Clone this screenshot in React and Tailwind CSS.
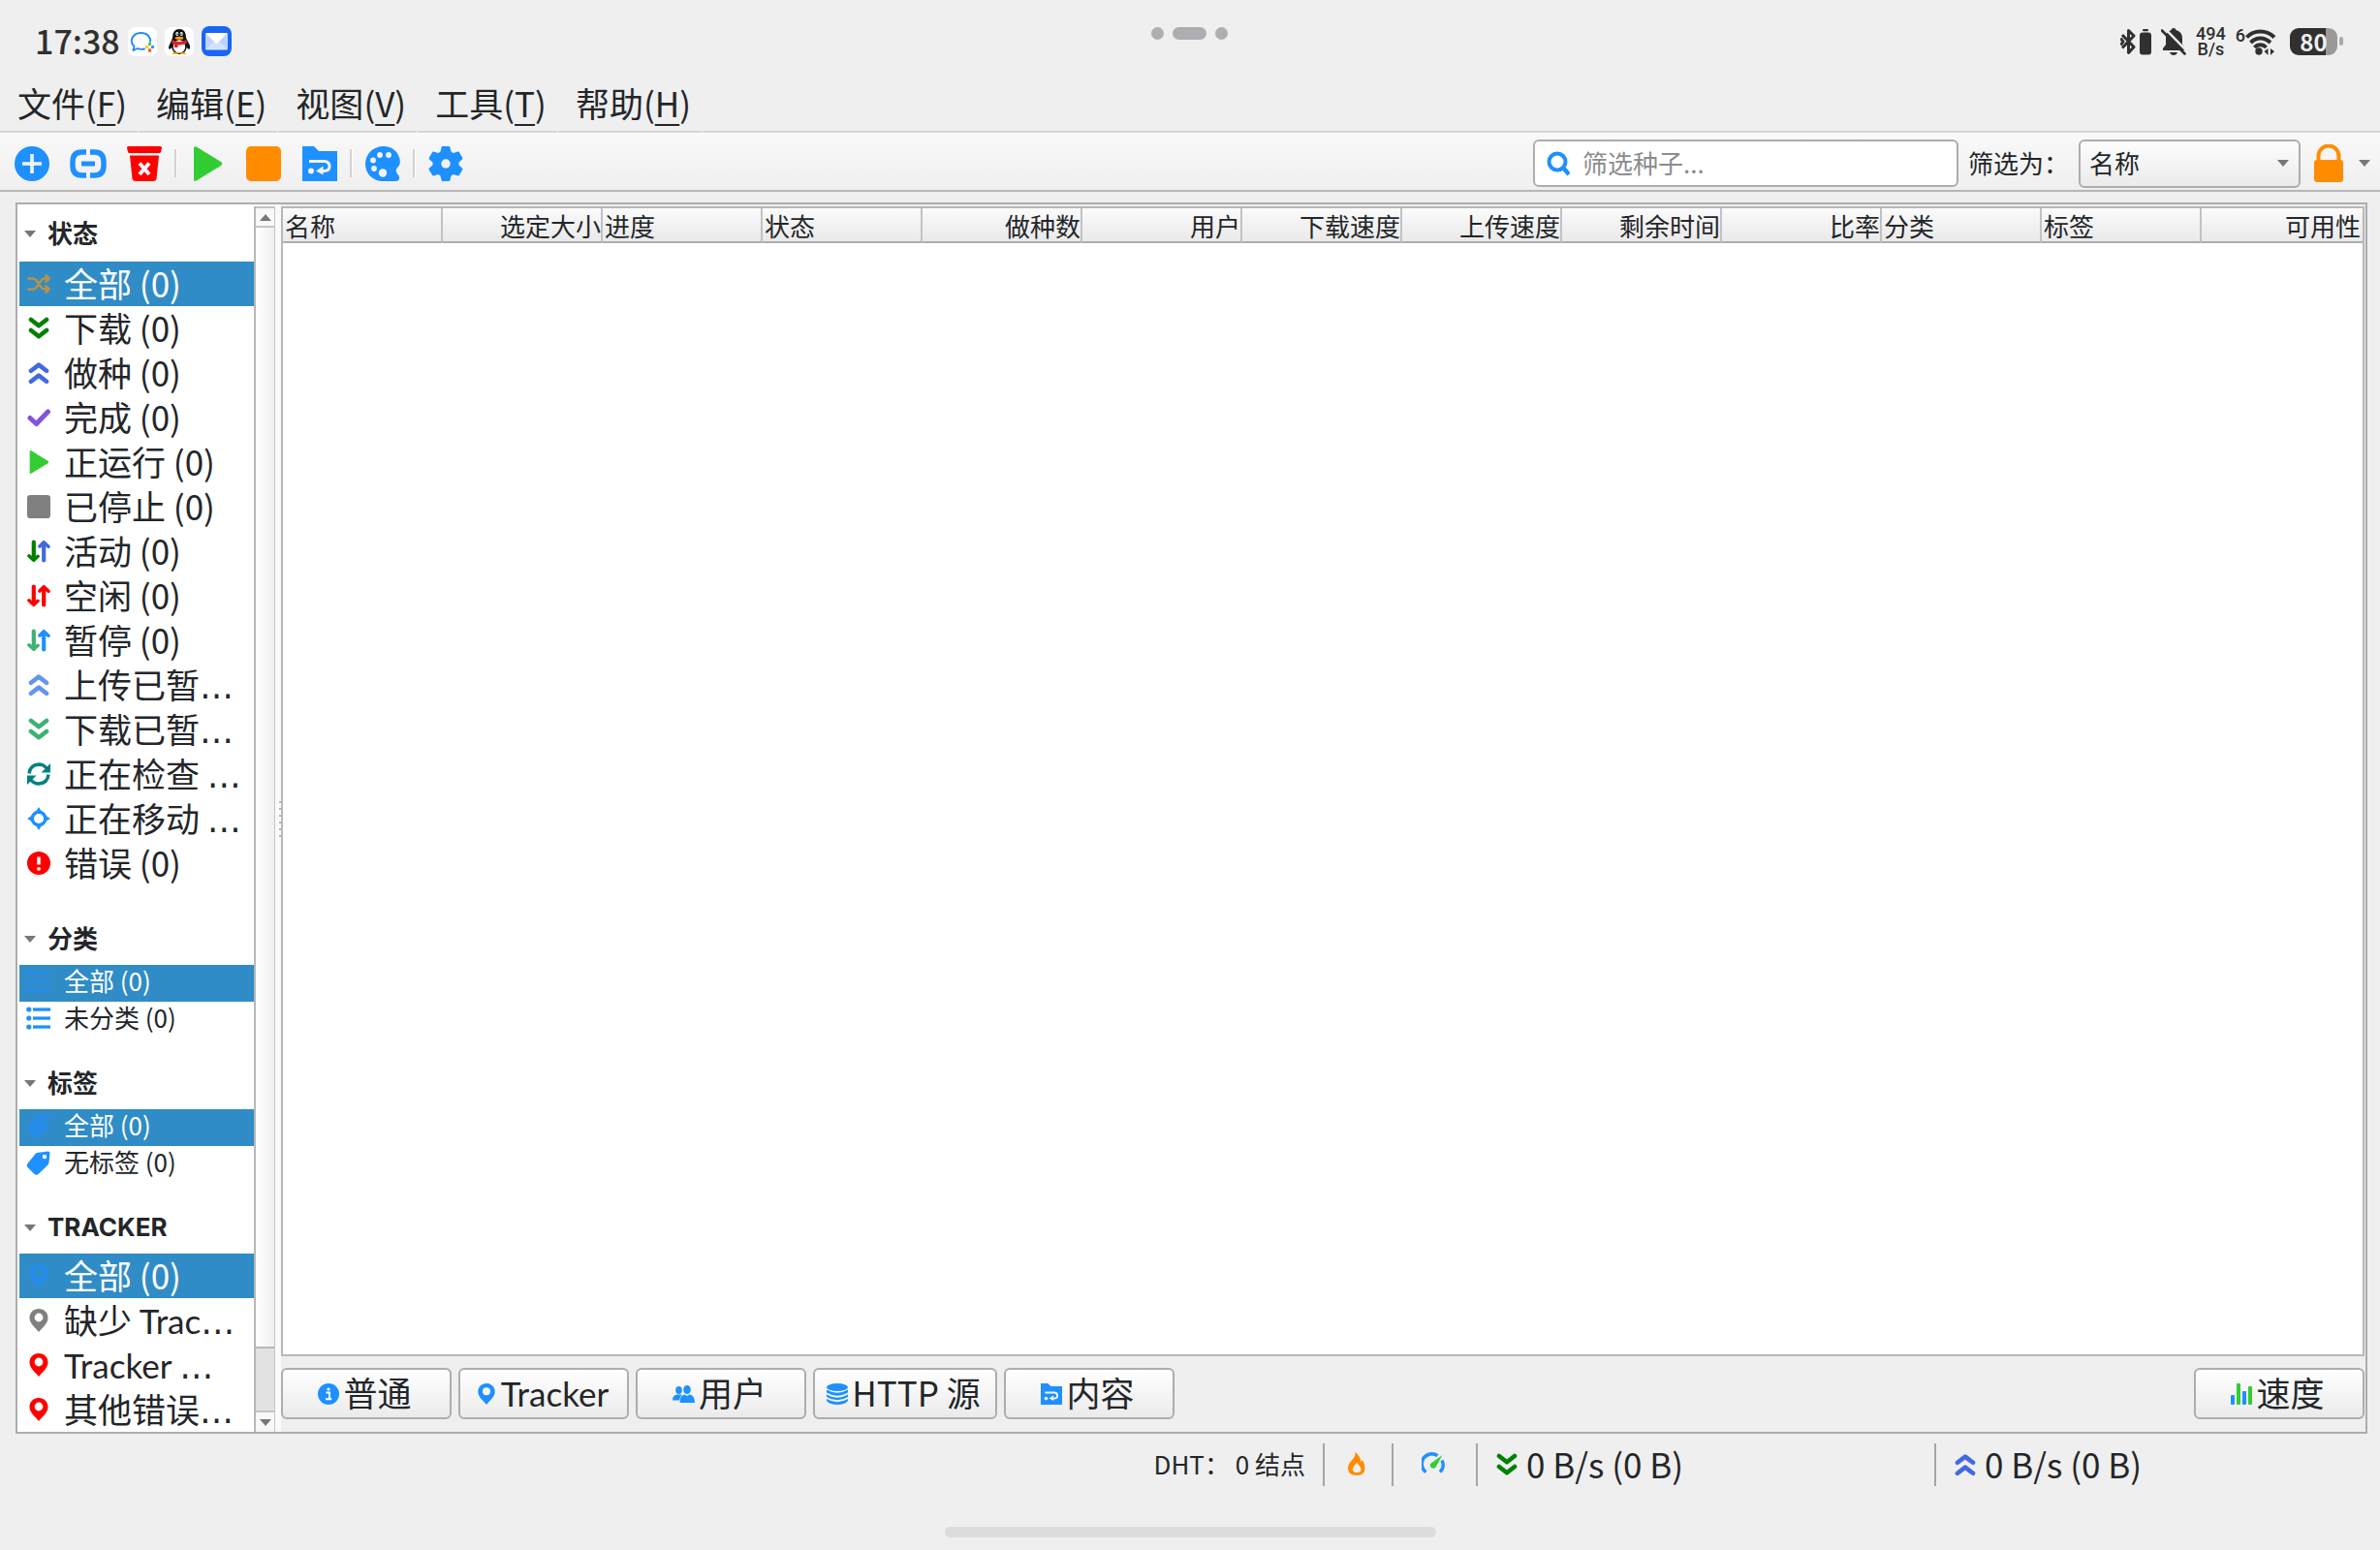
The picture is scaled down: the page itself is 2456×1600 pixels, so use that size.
import React from "react";

const BLUE = "#1e90ff";

function Svg({ w = 24, h = w, vb, className = "", children }) {
  return (
    <svg width={w} height={h} viewBox={vb || `0 0 ${w} ${h}`} className={"shrink-0 " + className} fill="none" aria-hidden="true">
      {children}
    </svg>
  );
}

/* ---------- toolbar drawings ---------- */
const AddIcon = () => (
  <Svg w={36}>
    <circle cx="18" cy="18" r="18" fill={BLUE} />
    <path d="M18 8v20M8 18h20" stroke="#f4f4f4" strokeWidth="3.6" />
  </Svg>
);
const LinkIcon = () => (
  <Svg w={38} h={30}>
    <path d="M17 3h-4.500Q3 3 3 13v4q0 10 9.500 10H17M21 3h4.500Q35 3 35 13v4q0 10-9.500 10H21" stroke={BLUE} strokeWidth="5.400" />
    <path d="M12 15h14" stroke={BLUE} strokeWidth="5" />
  </Svg>
);
const TrashIcon = () => (
  <Svg w={36}>
    <path d="M1.500 0h33a1.500 1.500 0 0 1 1.500 1.500l-1 4.500a1.500 1.500 0 0 1-1.500 1h-31A1.500 1.500 0 0 1 1 6L0 1.500A1.500 1.500 0 0 1 1.500 0zM3 9.500h30L30.500 33.500a3 3 0 0 1-3 2.500h-19a3 3 0 0 1-3-2.500z" fill="#f00" />
    <path d="M13 17.500l10 11.500M23 17.500L13 29" stroke="#f5f5f5" strokeWidth="4" />
  </Svg>
);
const PlayShape = ({ s }) => (
  <Svg w={s} vb="0 0 36 36">
    <path d="M4 2q0-3 3-1.200L32 16q2.500 2 0 4L7 35.200Q4 37 4 34z" fill="#32cd32" />
  </Svg>
);
const SquareShape = ({ s, c }) => (
  <Svg w={s} vb="0 0 36 36">
    <rect width="36" height="36" rx="5" fill={c} />
  </Svg>
);
const FolderIcon = ({ s }) => (
  <Svg w={s} vb="0 0 36 36">
    <path d="M0 0h12l5 5h19v31H0z" fill={BLUE} />
    <path d="M7 15.500h15.500q5.500 0 5.500 5.300 0 4.700-5.500 4.700H20" stroke="#f4f4f4" strokeWidth="3" />
    <path d="M14 25.500l7.500-5v9z" fill="#f4f4f4" />
    <circle cx="9" cy="25.500" r="3" fill="#f4f4f4" />
  </Svg>
);
const PaletteIcon = () => (
  <Svg w={36}>
    <path d="M19 0C8 0 0 8 0 18.500 0 28.500 8 36 18 36h14c3 0 4-4 2-6.500-3-3-3-6 0-8.500 2-2 2-5 1.500-8C33.500 5 27 0 19 0z" fill={BLUE} />
    <g fill="#f4f4f4">
      <circle cx="15" cy="9" r="2.900" />
      <circle cx="24" cy="9" r="2.900" />
      <circle cx="8" cy="14.500" r="2.900" />
      <circle cx="9" cy="23" r="2.900" />
      <circle cx="18" cy="27.500" r="4.200" />
    </g>
  </Svg>
);
const GearIcon = () => (
  <Svg w={36}>
    <g fill={BLUE}>
      <circle cx="18" cy="18" r="13.500" />
      {[0, 60, 120, 180, 240, 300].map((a) => (
        <path key={a} transform={`rotate(${a} 18 18)`} d="M12 8l1.500-7q.3-1 1.500-1h6q1.200 0 1.500 1L24 8z" />
      ))}
    </g>
    <circle cx="18" cy="18" r="4.700" fill="#f3f3f3" />
  </Svg>
);
const SearchIcon = () => (
  <Svg w={24} h={26}>
    <circle cx="11" cy="11" r="8.500" stroke={BLUE} strokeWidth="4" />
    <path d="M17 17l6 7" stroke={BLUE} strokeWidth="4.500" />
  </Svg>
);
const LockIcon = () => (
  <Svg w={30} h={39}>
    <path d="M4.500 18v-6a10.500 10.500 0 0 1 21 0v6" stroke="#ff8c00" strokeWidth="4" />
    <rect y="16" width="30" height="23" rx="3" fill="#ff8c00" />
  </Svg>
);
const Tri = ({ up, className = "" }) => (
  <Svg w={12} h={7} className={className}>
    <path d={up ? "M6 0l6 7H0z" : "M6 7L0 0h12z"} fill="#76777a" />
  </Svg>
);

/* ---------- list drawings, on a 24 px grid ---------- */
const Shuffle = () => (
  <Svg>
    <g stroke="#bb9145" strokeWidth="2.600" strokeLinecap="round" strokeLinejoin="round">
      <path d="M1.500 6.500H6q2 0 3.500 2l5 7q1.500 2 3.500 2h4M1.500 17.500H6q2 0 3.500-2l5-7q1.500-2 3.500-2h4" />
      <path d="M19.500 3.500l3.200 3-3.200 3M19.500 14.500l3.200 3-3.200 3" />
    </g>
  </Svg>
);
const Down = ({ c = "#008000" }) => (
  <Svg>
    <path d="M4 3l8 6.200L20 3M4 14l8 6.200L20 14" stroke={c} strokeWidth="4.600" strokeLinecap="round" strokeLinejoin="round" />
  </Svg>
);
const Up = ({ c = "#4169e1" }) => (
  <Svg>
    <path d="M4 9.800l8-6.200 8 6.200M4 20.800l8-6.200 8 6.200" stroke={c} strokeWidth="4.600" strokeLinecap="round" strokeLinejoin="round" />
  </Svg>
);
const Check = () => (
  <Svg>
    <path d="M3 12.500l6.500 6L21.500 6" stroke="#8452dc" strokeWidth="5" strokeLinecap="round" strokeLinejoin="round" />
  </Svg>
);
const Arrows = ({ a, b }) => (
  <Svg>
    <g strokeWidth="4.200" strokeLinecap="round" strokeLinejoin="round">
      <path d="M6.800 2.500V20" stroke={a} />
      <path d="M2 16.800l4.800 4.500 4.200-4" stroke={a} strokeWidth="3.600" />
      <path d="M17.200 21.500V4" stroke={b} />
      <path d="M13 7l4.200-4.300L22 7.200" stroke={b} strokeWidth="3.600" />
    </g>
  </Svg>
);
const Sync = () => (
  <Svg>
    <path d="M2 11.500Q3 2.500 12 2q5 0 8 4M22 12.500Q21 21.500 12 22q-5 0-8-4" stroke="#008080" strokeWidth="3.400" />
    <path d="M24 1v9.500h-9.500zM0 23v-9.500h9.500z" fill="#008080" />
  </Svg>
);
const Target = () => (
  <Svg>
    <circle cx="12" cy="12" r="6.800" stroke={BLUE} strokeWidth="3.400" />
    <path d="M12 0l3 5H9zM12 24l3-5H9zM0 12l5-3v6zM24 12l-5-3v6z" fill={BLUE} />
  </Svg>
);
const ErrorIcon = () => (
  <Svg>
    <circle cx="12" cy="12" r="12" fill="#f00" />
    <path d="M12 5.500v8" stroke="#fff" strokeWidth="3.400" />
    <circle cx="12" cy="17.800" r="1.900" fill="#fff" />
  </Svg>
);
const ListIcon = ({ c = BLUE }) => (
  <Svg w={25} h={24}>
    <g fill={c}>
      {[3, 12, 21].map((y) => (
        <g key={y}>
          <circle cx="2.800" cy={y} r="2.600" />
          <rect x="7" y={y - 1.6} width="18" height="3.300" />
        </g>
      ))}
    </g>
  </Svg>
);
const TagIcon = ({ c = BLUE, hole = "#fff" }) => (
  <Svg w={25} h={25}>
    <path d="M11 2l11.500-1.500q2 0 2 2L23.500 12Q23 14 21.500 15.500l-9 8.500q-2 1.500-4 0L1.500 17Q0 15 1.500 13L8 5q1.500-2.500 3-3z" fill={c} />
    <circle cx="19" cy="6" r="2.200" fill={hole} />
  </Svg>
);
const Pin = ({ c = "#f00", s = 24 }) => (
  <Svg w={s} vb="0 0 24 24">
    <path fillRule="evenodd" d="M12 0C6.500 0 2.500 4 2.500 9.300 2.500 15 7 18 12 24c5-6 9.500-9 9.500-14.700C21.500 4 17.500 0 12 0zm0 4.600a4.400 4.400 0 1 1 0 8.800 4.400 4.400 0 0 1 0-8.800z" fill={c} />
  </Svg>
);

/* ---------- bottom bar drawings ---------- */
const Info = () => (
  <Svg w={22}>
    <circle cx="11" cy="11" r="11" fill={BLUE} />
    <circle cx="11" cy="6" r="1.600" fill="#fff" />
    <path d="M8.500 9.500H12v6.500M8 16.200h6.200" stroke="#fff" strokeWidth="2" />
  </Svg>
);
const Users = () => (
  <Svg w={23} h={18}>
    <g fill={BLUE}>
      <ellipse cx="6.500" cy="5" rx="3.300" ry="4" />
      <path d="M0 15.500q0-5 4.500-6h5L7.500 13.500 7 15.500z" />
      <ellipse cx="15" cy="4.500" rx="3.800" ry="4.500" />
      <path d="M7.500 18q0-8 5-8.500l2.500 1.500 2.500-1.500q5.500.500 5.500 8.500z" />
    </g>
  </Svg>
);
const Database = () => (
  <Svg w={22}>
    <ellipse cx="11" cy="4" rx="11" ry="4" fill={BLUE} />
    <path d="M0 6.500q11 6.500 22 0v3q-11 6.500-22 0zM0 11.500q11 6.500 22 0v2.500q-11 6.500-22 0zM0 16q11 6.500 22 0v2q-3 4-11 4T0 18z" fill={BLUE} />
  </Svg>
);
const Bars = () => (
  <Svg w={22}>
    <rect x="0" y="12" width="4" height="10" rx="1" fill={BLUE} />
    <rect x="6" y="0" width="4" height="22" rx="1" fill="#32cd32" />
    <rect x="12" y="8" width="4" height="14" rx="1" fill={BLUE} />
    <rect x="18" y="3" width="4" height="19" rx="1" fill="#32cd32" />
  </Svg>
);
const Flame = () => (
  <Svg w={20} h={24}>
    <path fillRule="evenodd" d="M8.500 0Q9 4 5 8.500 1 12.500 1 16.500 1 24 10 24q8.500 0 8.500-7.500 0-4.500-2.500-8.500l-1.500 2Q13.500 3.500 8.500 0zM10 11q4.500 4 4.500 7t-4.500 3q-4 0-4-3t4-7z" fill="#ff8c00" />
  </Svg>
);
const Gauge = () => (
  <Svg>
    <path d="M4.500 20.500a10 10 0 0 1 12-16.800M21 8.500a10 10 0 0 1-2 12" stroke={BLUE} strokeWidth="3.500" />
    <path d="M21.500 3L14.500 15.500a3.300 3.300 0 0 1-5.500-3.500z" fill="#32cd32" />
  </Svg>
);

/* ---------- system bar drawings ---------- */
const ChatApp = () => (
  <Svg w={30}>
    <rect width="30" height="30" rx="7" fill="#fff" />
    <path d="M17 22.500q-4 1-7-.500l-4.500 2 1-4Q3 16.500 4 12.500 6 6 13.500 6T23 12.500q.3 1.500 0 2.500" stroke="#1e88f5" strokeWidth="1.900" strokeLinecap="round" strokeLinejoin="round" />
    <circle cx="22.500" cy="17.500" r="1.700" fill="#4cc24c" />
    <circle cx="19.500" cy="20.500" r="1.700" fill="#ffc320" />
    <circle cx="25.500" cy="20.500" r="1.700" fill="#2a8df5" />
    <circle cx="22.500" cy="24" r="1.900" fill="#f4622c" />
  </Svg>
);
const PenguinApp = () => (
  <Svg w={30}>
    <rect width="30" height="30" rx="7" fill="#fff" />
    <path d="M8 11q0-9 7-9t7 9l3.500 7q1.500 4-.5 5l-2.500-2-15 0L5 23q-2-1 0-5z" fill="#111" />
    <ellipse cx="15" cy="20" rx="7" ry="7.500" fill="#fff" stroke="#111" strokeWidth="1.600" />
    <path d="M8 28q0-2 3-2t3.500 2zM15.500 28q.5-2 3.500-2t3 2z" fill="#f6a800" />
    <ellipse cx="12.800" cy="7" rx="1.500" ry="2" fill="#fff" />
    <ellipse cx="17.200" cy="7" rx="1.500" ry="2" fill="#fff" />
    <circle cx="13.200" cy="7.300" r=".8" fill="#111" />
    <circle cx="16.800" cy="7.300" r=".8" fill="#111" />
    <ellipse cx="15" cy="11.300" rx="4.300" ry="1.500" fill="#f6a800" />
    <path d="M7.500 13q7.500 4 15 0l.5 3.500q-5 2.500-9.500 2V21h-3.500v-3.500L7 16.500z" fill="#e0202a" />
  </Svg>
);
const MailApp = () => (
  <Svg w={31}>
    <rect width="31" height="31" rx="8" fill="#1a66f2" />
    <rect x="4" y="7" width="23" height="17.500" rx="1.500" fill="#d3e2fc" />
    <path d="M4 8v16l9-8.500zM27 8v16l-9-8.500z" fill="#bdd3fb" />
    <path d="M4.500 7h22L16.500 17.500q-1 .8-2 0z" fill="#fff" />
  </Svg>
);
const INK = "#303030";
const Bluetooth = () => (
  <Svg w={32} h={28}>
    <path d="M2 7l12 12.500-5.500 6V2.500L14 8 2 20.500M.500 10.500L3 14l-2.500 3.500" stroke={INK} strokeWidth="3" strokeLinejoin="round" />
    <rect x="20" y="4.500" width="12" height="23" rx="3" fill={INK} />
    <rect x="23" y="1" width="6" height="2.200" rx="1" fill={INK} />
  </Svg>
);
const BellOff = () => (
  <Svg w={26} h={28}>
    <path d="M13 0q2.300 0 2.500 2 6.500 1.500 6.500 9v6l3 4v2H2v-2l3-4v-6q0-7.500 5.500-9Q10.700 0 13 0zM9 25h8q-1 3-4 3t-4-3z" fill={INK} />
    <path d="M3.500 0L26 23" stroke="#efefef" strokeWidth="2.500" />
    <path d="M1 2.500L24.500 26.500" stroke={INK} strokeWidth="2.600" strokeLinecap="round" />
  </Svg>
);
const Wifi = () => (
  <Svg w={32} h={28}>
    <path d="M1.500 9.500Q7 3.500 15.500 3.500T30 9.500M5.500 15Q10 10.500 15.500 10.500T26 15M9.500 20Q12 17.300 15.500 17.300T21.500 20" stroke={INK} strokeWidth="4" />
    <circle cx="14" cy="24" r="3.700" fill={INK} />
    <path d="M23.500 21v7l-4-4zM26 21v7l4-4z" fill={INK} />
  </Svg>
);

/* ---------- sidebar ---------- */
const Dots = () => <span className="font-['DejaVu_Sans',sans-serif]">…</span>;
const Latin = ({ children }) => <span className="font-[Lato,sans-serif]">{children}</span>;

const STATUS = [
  [<Shuffle />, "全部 (0)"],
  [<Down />, "下载 (0)"],
  [<Up />, "做种 (0)"],
  [<Check />, "完成 (0)"],
  [<PlayShape s={24} />, "正运行 (0)"],
  [<SquareShape s={24} c="#808080" />, "已停止 (0)"],
  [<Arrows a="#008000" b="#4169e1" />, "活动 (0)"],
  [<Arrows a="#f00" b="#f00" />, "空闲 (0)"],
  [<Arrows a="#3cb371" b={BLUE} />, "暂停 (0)"],
  [<Up c="#6495ed" />, "上传已暂", true],
  [<Down c="#3cb371" />, "下载已暂", true],
  [<Sync />, "正在检查 ", true],
  [<Target />, "正在移动 ", true],
  [<ErrorIcon />, "错误 (0)"],
];
const CATEGORIES = [
  [<ListIcon c="#258de9" />, "全部 (0)"],
  [<ListIcon />, "未分类 (0)"],
];
const TAGS = [
  [<TagIcon c="#258de9" hole="#308cc6" />, "全部 (0)"],
  [<TagIcon />, "无标签 (0)"],
];
const TRACKERS = [
  [<Pin c="#258de9" />, "全部 (0)"],
  [<Pin c="#808080" />, <>缺少 <Latin>Trac</Latin></>, true],
  [<Pin />, <><Latin>Tracker</Latin> </>, true],
  [<Pin />, "其他错误", true],
];

function Heading({ children, tall }) {
  return (
    <button type="button" className={"flex w-full items-center gap-3 pl-[5px] text-left text-[26px] leading-8 font-bold " + (tall ? "h-[57px]" : "h-[53px]")}>
      <Tri />
      <span className="pb-[3px]">{children}</span>
    </button>
  );
}

function Items({ items, small, className = "" }) {
  return (
    <ul className={className}>
      {items.map(([icon, text, cut], i) => (
        <li key={i}>
          <button
            type="button"
            className={
              "flex w-full items-center gap-[14px] pl-[7px] whitespace-pre " +
              (small ? "h-[38px] pb-1 text-[26px] leading-8 " : "h-[46px] text-[35px] leading-[44px] ") +
              (i === 0 ? "bg-[#308cc6] text-white" : "")
            }
          >
            <span className="flex w-[25px] shrink-0 justify-center">{icon}</span>
            <span className={cut ? "" : "pb-[2px]"}>
              {text}
              {cut && <Dots />}
            </span>
          </button>
        </li>
      ))}
    </ul>
  );
}

function Sidebar() {
  return (
    <aside className="flex shrink-0 bg-white pt-[2px] pl-[2px]">
      <nav className="h-[1265px] w-[242px] overflow-hidden" aria-label="过滤器">
        <Heading tall>状态</Heading>
        <Items items={STATUS} className="pb-[29px]" />
        <Heading>分类</Heading>
        <Items items={CATEGORIES} small className="pb-5" />
        <Heading>标签</Heading>
        <Items items={TAGS} small className="pb-5" />
        <Heading>
          <span className="font-[Inter,sans-serif]">TRACKER</span>
        </Heading>
        <Items items={TRACKERS} />
      </nav>
      <div className="flex w-[22px] flex-col border-r border-l-2 border-r-[#c4c4c4] border-l-[#b8b8b8]">
        <button type="button" aria-label="向上" className="flex h-[22px] items-center justify-center border-y-2 border-[#c4c4c4] bg-[#f8f8f8]">
          <Tri up />
        </button>
        <div className="flex-1 bg-linear-to-r from-white to-[#f0f0f0]" />
        <div className="h-[66px] border-t-2 border-[#b8b8b8] bg-[#e2e2e2]" />
        <button type="button" aria-label="向下" className="flex h-[22px] items-center justify-center border-t-2 border-[#c4c4c4] bg-[#f8f8f8]">
          <Tri />
        </button>
      </div>
      <div className="flex w-[6px] flex-col items-end justify-center gap-[5px] bg-[#fafafa]">
        {[0, 1, 2, 3, 4, 5].map((i) => (
          <span key={i} className="h-[2px] w-[2px] bg-[#b4b4b4]" />
        ))}
      </div>
    </aside>
  );
}

/* ---------- table ---------- */
const COLUMNS = [
  ["名称"], ["选定大小", 1], ["进度"], ["状态"], ["做种数", 1], ["用户", 1], ["下载速度", 1],
  ["上传速度", 1], ["剩余时间", 1], ["比率", 1], ["分类"], ["标签"], ["可用性", 1],
];

function Torrents() {
  return (
    <div className="flex-1 overflow-hidden border-2 border-[#b8b8b8] bg-white">
      <table className="w-full table-fixed border-separate border-spacing-0">
        <thead>
          <tr>
            {COLUMNS.map(([name, right], i) => (
              <th
                key={name}
                scope="col"
                className={
                  "h-[36px] border-b-2 border-b-[#adadad] bg-linear-to-b from-[#fbfbfb] to-[#e9e9e9] p-0 text-[26px] leading-[33px] font-normal whitespace-nowrap " +
                  (right ? "text-right " : "pl-[2px] text-left ") +
                  (i < 12 ? "w-[165px] border-r-2 border-r-[#c2c2c2]" : "pr-[2px]")
                }
              >
                {name}
              </th>
            ))}
          </tr>
        </thead>
        <tbody />
      </table>
    </div>
  );
}

function TabButton({ icon, children, wide }) {
  return (
    <button
      type="button"
      className={
        "flex h-[53px] items-center justify-center gap-1 rounded-md border-2 border-[#adadad] bg-linear-to-b from-white to-[#ebebeb] pr-[3px] text-[35px] leading-[44px] " +
        (wide ? "w-[190px]" : "w-[176px]")
      }
    >
      {icon}
      <span className="pb-[3px]">{children}</span>
    </button>
  );
}

const MENU = [["文件", "F"], ["编辑", "E"], ["视图", "V"], ["工具", "T"], ["帮助", "H"]];

function ToolButton({ label, children }) {
  return (
    <button type="button" aria-label={label} className="flex h-9 w-9 items-center justify-center">
      {children}
    </button>
  );
}
const ToolSep = () => <span className="mx-[13px] h-[29px] w-[3px] border-r border-l-2 border-r-white border-l-[#d2d2d2]" />;

export default function App() {
  return (
    <div className="flex min-h-screen w-full flex-col bg-[#efefef] font-['Noto_Sans_CJK_SC',sans-serif] text-[#232629]" lang="zh-CN">
      {/* system bar */}
      <header className="grid h-[81px] grid-cols-3 items-center pt-1 text-[#303030]">
        <div className="flex items-center gap-2 pl-9">
          <time className="pb-px text-[34px] leading-[46px] font-medium">17:38</time>
          <ChatApp />
          <PenguinApp />
          <MailApp />
        </div>
        <div className="flex items-center justify-center gap-[9px] pb-4">
          <span className="h-[13px] w-[13px] rounded-full bg-[#acaeb2]" />
          <span className="h-[13px] w-[35px] rounded-full bg-[#acaeb2]" />
          <span className="h-[13px] w-[13px] rounded-full bg-[#acaeb2]" />
        </div>
        <div className="flex items-center justify-end gap-[10px] pr-[38px] font-medium">
          <Bluetooth />
          <BellOff />
          <div className="flex flex-col items-center font-[Roboto,sans-serif] text-[18px] leading-[16px]">
            <span>494</span>
            <span>B/s</span>
          </div>
          <div className="flex items-center">
            <span className="pb-3 font-[Roboto,sans-serif] text-[18px] leading-[18px]">6</span>
            <Wifi />
          </div>
          <div className="ml-1 flex items-center gap-[2px]">
            <span className="flex h-[28px] w-[49px] items-center justify-center rounded-[9px] bg-linear-to-r from-[#303030] from-76% to-[#999] to-76% text-[24px] leading-[28px] font-bold text-[#efefef]">
              80
            </span>
            <span className="h-[9px] w-1 rounded-sm bg-[#aaa]" />
          </div>
        </div>
      </header>

      {/* menu bar */}
      <nav className="flex gap-px">
        {MENU.map(([name, key]) => (
          <button key={key} type="button" className="border-b-2 border-[#d5d5d5] pr-[11px] pb-1 pl-[18px] text-[35px] leading-[50px]">
            {name}(<span className="underline decoration-2 underline-offset-[7px]">{key}</span>)
          </button>
        ))}
        <span className="flex-1 border-b-2 border-[#d5d5d5]" />
      </nav>

      {/* toolbar */}
      <div className="flex h-[61px] items-center border-b-2 border-[#b6b6b6] bg-linear-to-b from-[#f9f9f9] to-[#efefef] pt-1 pr-[10px] pl-[15px]" role="toolbar">
        <div className="flex gap-[22px]">
          <ToolButton label="添加种子"><AddIcon /></ToolButton>
          <ToolButton label="添加链接"><LinkIcon /></ToolButton>
          <ToolButton label="删除"><TrashIcon /></ToolButton>
        </div>
        <ToolSep />
        <div className="flex gap-[22px]">
          <ToolButton label="启动"><PlayShape s={36} /></ToolButton>
          <ToolButton label="停止"><SquareShape s={36} c="#ff8c00" /></ToolButton>
          <ToolButton label="打开目录"><FolderIcon s={36} /></ToolButton>
        </div>
        <ToolSep />
        <ToolButton label="主题"><PaletteIcon /></ToolButton>
        <ToolSep />
        <ToolButton label="选项"><GearIcon /></ToolButton>

        <div className="ml-auto flex items-center text-[26px] leading-8">
          <label className="flex h-[49px] w-[439px] items-center gap-[13px] rounded-md border-2 border-[#adadad] bg-white pl-3">
            <SearchIcon />
            <input type="text" aria-label="筛选种子" placeholder="筛选种子..." className="w-full min-w-0 bg-transparent pb-[2px] outline-none placeholder:text-[#8b8c8e]" />
          </label>
          <label htmlFor="filter-by" className="ml-[10px] w-[114px] pb-[2px]">筛选为：</label>
          <div className="grid items-center">
            <select id="filter-by" className="col-start-1 row-start-1 h-[50px] w-[229px] appearance-none rounded-md border-2 border-[#adadad] bg-linear-to-b from-[#fdfdfd] to-[#ebebeb] pb-[2px] pl-[9px]">
              <option>名称</option>
            </select>
            <Tri className="pointer-events-none col-start-1 row-start-1 mr-3 justify-self-end" />
          </div>
          <button type="button" aria-label="锁定" className="ml-[14px] flex items-center gap-4">
            <LockIcon />
            <Tri />
          </button>
        </div>
      </div>

      {/* main area */}
      <main className="mt-[11px] mr-[13px] ml-4 flex border-2 border-[#adadad]">
        <Sidebar />
        <div className="flex min-w-0 flex-1 flex-col pt-[2px] pr-px">
          <Torrents />
          <div className="flex gap-[7px] pt-3 pb-[13px]">
            <TabButton icon={<Info />}>普通</TabButton>
            <TabButton icon={<Pin c={BLUE} s={22} />}><Latin>Tracker</Latin></TabButton>
            <TabButton icon={<Users />}>用户</TabButton>
            <TabButton icon={<Database />} wide>HTTP 源</TabButton>
            <TabButton icon={<FolderIcon s={22} />}>内容</TabButton>
            <span className="flex-1" />
            <TabButton icon={<Bars />}>速度</TabButton>
          </div>
        </div>
      </main>

      {/* status bar */}
      <footer className="flex flex-1 flex-col items-center justify-between pt-[10px] pb-[13px]">
        <div className="flex h-11 w-full items-center justify-end">
          <span className="pr-[18px] pb-[2px] text-[26px] leading-8">DHT： 0 结点</span>
          <button type="button" aria-label="连接状态" className="flex h-11 w-[71px] items-center justify-center border-l-2 border-[#a6a6a6] pr-[3px] pb-[2px]">
            <Flame />
          </button>
          <button type="button" aria-label="备用速度限制" className="flex h-11 w-[87px] items-center justify-center border-l-2 border-[#a6a6a6] pr-[3px] pb-[2px]">
            <Gauge />
          </button>
          <button type="button" className="flex h-11 w-[473px] items-center gap-2 border-l-2 border-[#a6a6a6] pl-[18px] text-[35px] leading-[41px]">
            <Down />
            <span className="pb-[3px]">0 B/s (0 B)</span>
          </button>
          <button type="button" className="flex h-11 w-[460px] items-center gap-2 border-l-2 border-[#a6a6a6] pl-[18px] text-[35px] leading-[41px]">
            <Up />
            <span className="pb-[3px]">0 B/s (0 B)</span>
          </button>
        </div>
        <span className="h-[11px] w-[507px] rounded-full bg-[#dcdcdc]" />
      </footer>
    </div>
  );
}
